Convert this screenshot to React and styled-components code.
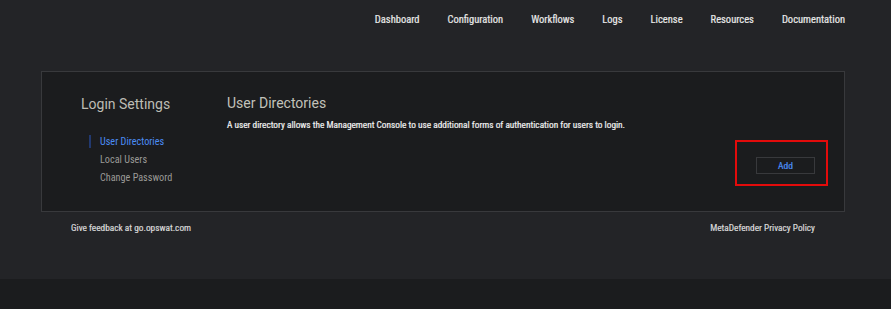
import React from 'react';
import styled, { createGlobalStyle } from 'styled-components';

// colours picked from the screenshot
const pageBg = "#232427";
const cardBg = "#1b1c1e";
const lineColor = "#38393c";
const blue = "#4b8df5";
const narrow = `"Liberation Sans Narrow", "Roboto Condensed", Roboto, sans-serif`;

const GlobalStyle = createGlobalStyle`
  html, body {
    margin: 0;
    padding: 0;
    background: ${cardBg};
    font-family: ${narrow};
  }
`;

const Shell = styled.div`
  background: ${pageBg};
  height: 279px;
  display: flex;
  flex-direction: column;
`;

const TopNav = styled.nav`
  height: 38px;
  display: flex;
  justify-content: flex-end;
  align-items: center;
  gap: 28px;
  padding-right: 46px;
`;

const NavLink = styled.a`
  color: #e8e8e8;
  font-size: 10.5px;
  font-weight: 400;
  -webkit-text-stroke: 0.2px #e8e8e8;
  text-decoration: none;
  cursor: pointer;
`;

const Card = styled.section`
  margin: 33px 46px 0 41px;
  height: 139px;
  background: ${cardBg};
  border: 1px solid ${lineColor};
  display: flex;
`;

const Sidebar = styled.aside`
  width: 146px;
  padding: 24px 0 0 39px;
  flex-shrink: 0;
`;

const SideTitle = styled.h2`
  margin: 0 0 23px;
  font-family: Roboto, sans-serif;
  font-weight: 400;
  font-size: 14px;
  color: #bdbdb5;
`;

const Menu = styled.ul`
  list-style: none;
  margin: 0;
  padding: 0 0 0 8px;
  display: flex;
  flex-direction: column;
  gap: 5px;
`;

const MenuItem = styled.li`
  font-size: 10.2px;
  line-height: 13px;
  padding-left: 9px;
  border-left: 2px solid ${p => (p.active ? "#22396f" : "transparent")};
  color: ${p => (p.active ? blue : "#9a9a96")};
  cursor: pointer;
`;

const Content = styled.div`
  flex: 1;
  padding: 23px 16px 0 0;
  display: flex;
  flex-direction: column;
`;

const Heading = styled.h1`
  margin: 0 0 8px;
  font-family: Roboto, sans-serif;
  font-weight: 400;
  font-size: 14px;
  color: #c2c2ba;
`;

const Description = styled.p`
  margin: 0;
  font-size: 9.3px;
  line-height: 12px;
  font-weight: 400;
  -webkit-text-stroke: 0.2px #f0f0f0;
  color: #f0f0f0;
`;

const Actions = styled.div`
  display: flex;
  justify-content: flex-end;
  margin-top: 9px;
`;

const Highlight = styled.div`
  border: 2px solid #e30b0b;
  padding: 12px 11px 10px 19px;
`;

const Button = styled.button`
  width: 59px;
  height: 17px;
  background: transparent;
  border: 1px solid ${lineColor};
  color: ${blue};
  font-family: ${narrow};
  font-size: 9.5px;
  font-weight: 400;
  -webkit-text-stroke: 0.2px ${blue};
  padding: 0;
  cursor: pointer;
`;

const Footer = styled.footer`
  display: flex;
  justify-content: space-between;
  padding: 10px 76px 0 71px;
`;

const FooterText = styled.span`
  font-size: 9.3px;
  font-weight: 400;
  -webkit-text-stroke: 0.2px #d8d8d8;
  color: #d8d8d8;
`;

const navItems = ["Dashboard", "Configuration", "Workflows", "Logs", "License", "Resources", "Documentation"];

export default function App() {
  return (
    <>
      <GlobalStyle />
      <Shell>
        <TopNav>
          {navItems.map(n => <NavLink key={n}>{n}</NavLink>)}
        </TopNav>
        <Card>
          <Sidebar>
            <SideTitle>Login Settings</SideTitle>
            <Menu>
              <MenuItem active>User Directories</MenuItem>
              <MenuItem>Local Users</MenuItem>
              <MenuItem>Change Password</MenuItem>
            </Menu>
          </Sidebar>
          <Content>
            <Heading>User Directories</Heading>
            <Description>
              A user directory allows the Management Console to use additional forms of authentication for users to login.
            </Description>
            <Actions>
              <Highlight>
                <Button>Add</Button>
              </Highlight>
            </Actions>
          </Content>
        </Card>
        <Footer>
          <FooterText>Give feedback at go.opswat.com</FooterText>
          <FooterText>MetaDefender Privacy Policy</FooterText>
        </Footer>
      </Shell>
    </>
  );
}
